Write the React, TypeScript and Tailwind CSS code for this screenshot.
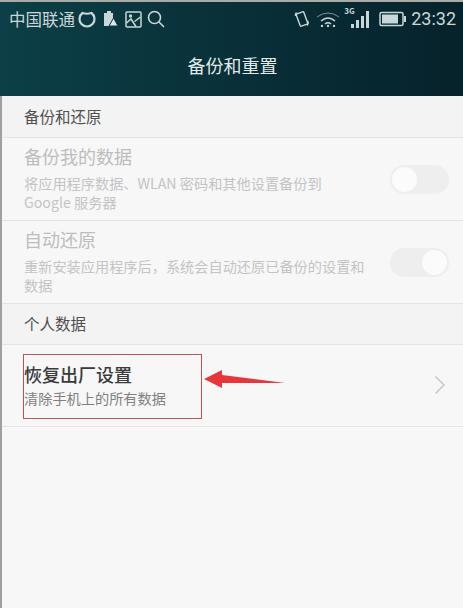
const cjk = { fontFamily: '"Noto Sans CJK SC", "Liberation Sans", sans-serif' }

function StatusBar() {
  return (
    <div className="flex h-[34px] items-center justify-between pl-[9px] pr-[7px] text-[#c8d8d8]">
      <div className="flex items-center">
        <span className="text-[16.5px] leading-none">中国联通</span>
        <svg width="18" height="18" viewBox="0 0 18 18" className="ml-[3px]" fill="none" stroke="currentColor" strokeWidth="2.2">
          <path d="M4.5 3 A7.5 7.5 0 1 0 13.5 3 Q9 4.5 4.5 3Z" />
        </svg>
        <svg width="17" height="18" viewBox="0 0 17 18" className="ml-[6px]" fill="currentColor">
          <path d="M5 1h4v2h2v6L7 16H2V3h3z" />
          <path d="M11.5 8l4.5 8H7z" fill="#dfe8e8" stroke="#103f46" />
        </svg>
        <svg width="17" height="17" viewBox="0 0 17 17" className="ml-[6px]" fill="none" stroke="currentColor" strokeWidth="1.5">
          <rect x="1" y="1" width="15" height="15" rx="1" />
          <path d="M1.5 12 L6 8 L11 15.5 M9.5 10.5 L15.5 6" />
          <circle cx="5.5" cy="5" r="1" />
        </svg>
        <svg width="18" height="18" viewBox="0 0 18 18" className="ml-[5px]" fill="none" stroke="currentColor" strokeWidth="1.6">
          <circle cx="7.5" cy="7.5" r="6" />
          <path d="M12 12 L17 17" />
        </svg>
      </div>
      <div className="flex items-center">
        <svg width="16" height="18" viewBox="0 0 16 18" fill="none" stroke="currentColor" strokeWidth="1.4">
          <rect x="4" y="2.5" width="8" height="13" rx="1" transform="rotate(-20 8 9)" />
          <path d="M13.5 11 Q15 13 13 15.5 M1.5 6 Q1 4 2.5 2.5" />
        </svg>
        <svg width="24" height="16" viewBox="0 0 24 16" className="ml-[6px]" fill="none" stroke="currentColor">
          <path d="M1 6 Q12 -2 23 6" strokeWidth="1" opacity="0.6" />
          <path d="M5 10 Q12 4 19 10" strokeWidth="1.6" />
          <path d="M9 13 Q12 10.5 15 13" strokeWidth="1.6" />
          <circle cx="12" cy="15" r="1.2" fill="currentColor" stroke="none" />
          <circle cx="6" cy="15" r="1.2" fill="currentColor" stroke="none" />
          <circle cx="18" cy="15" r="1.2" fill="currentColor" stroke="none" />
        </svg>
        <div className="relative ml-[4px] h-[20px] w-[25px]">
          <span className="absolute left-0 top-[-2px] text-[8px] font-bold leading-none">3G</span>
          <svg width="25" height="20" viewBox="0 0 25 20" fill="currentColor">
            <rect x="7" y="15" width="3" height="4" />
            <rect x="12" y="11" width="3" height="8" />
            <rect x="17" y="7" width="3" height="12" />
            <rect x="22" y="2" width="3" height="17" />
          </svg>
        </div>
        <svg width="27" height="16" viewBox="0 0 27 16" className="ml-[10px]">
          <rect x="1" y="1.5" width="23" height="13" rx="1.5" fill="none" stroke="#c8d8d8" strokeWidth="1.5" />
          <rect x="3" y="3.5" width="16" height="9" fill="#c8d8d8" />
          <rect x="25" y="5" width="2" height="6" fill="#c8d8d8" />
        </svg>
        <span className="ml-[5px] text-[18px] leading-none" style={{ fontFamily: 'Roboto, sans-serif' }}>23:32</span>
      </div>
    </div>
  )
}

function SectionHeader({ title, height }: { title: string; height: string }) {
  return (
    <div className={`flex items-center border-b border-[#e4e4e4] bg-[#f3f3f3] pl-[22px] text-[15.5px] text-[#505050] ${height}`}>
      {title}
    </div>
  )
}

function Toggle({ on }: { on?: boolean }) {
  return (
    <div className={`flex h-[29px] w-[59px] items-center rounded-full bg-[#eeeeee] p-[2px] ${on ? 'justify-end' : 'justify-start'}`}>
      <div className="h-[25px] w-[25px] rounded-full bg-[#fbfbfb]" />
    </div>
  )
}

function ToggleRow({ title, desc, on }: { title: string; desc: string; on?: boolean }) {
  return (
    <div className="flex h-[83px] items-center border-b border-[#e4e4e4] pl-[22px] pr-[14px]">
      <div className="min-w-0 flex-1 pb-[3px]">
        <p className="text-[18px] leading-[24px] text-[#bdbdbd]">{title}</p>
        <p className="mt-[6px] w-[345px] text-[14.2px] leading-[19px] text-[#c4c4c4]">{desc}</p>
      </div>
      <Toggle on={on} />
    </div>
  )
}

export default function App() {
  return (
    <div className="flex h-[608px] w-[463px] flex-col overflow-hidden bg-[#f7f7f7]" style={cjk}>
      <div className="h-[2px] bg-[#a9aca6]" />
      <header className="h-[94px] bg-gradient-to-r from-[#0c3f47] to-[#06222b]">
        <StatusBar />
        <h1 className="mt-[17px] pl-[2px] text-center text-[18px] leading-[24px] text-[#e0eaea]">备份和重置</h1>
      </header>
      <div className="flex-1 border-l-2 border-[#a0a0a0]">
        <SectionHeader title="备份和还原" height="h-[42px]" />
        <ToggleRow
          title="备份我的数据"
          desc="将应用程序数据、WLAN 密码和其他设置备份到 Google 服务器"
        />
        <ToggleRow
          title="自动还原"
          desc="重新安装应用程序后，系统会自动还原已备份的设置和数据"
          on
        />
        <SectionHeader title="个人数据" height="h-[41px]" />
        <div className="flex h-[82px] items-center border-b border-[#e4e4e4] pb-[2px] pl-[22px] pr-[17px]">
          <div className="min-w-0 flex-1">
            <p className="text-[18px] font-medium leading-[24px] text-[#3a3a3a]">恢复出厂设置</p>
            <p className="mt-[2px] text-[14.2px] leading-[20px] text-[#808080]">清除手机上的所有数据</p>
          </div>
          <svg width="12" height="20" viewBox="0 0 12 20" fill="none" stroke="#c4c4c4" strokeWidth="1.4">
            <path d="M1.5 1.5 L10 10 L1.5 18.5" />
          </svg>
        </div>
      </div>
      {/* annotation drawn over the screenshot */}
      <div className="pointer-events-none absolute left-[23px] top-[354px] h-[65px] w-[179px] border border-[#b9525a]" />
      <svg className="pointer-events-none absolute left-[203px] top-[368px]" width="83" height="22" viewBox="0 0 83 22">
        <path d="M1 11 L19 2 L19 7 L82 15 L19 15 L19 20 Z" fill="#e8353a" />
      </svg>
    </div>
  )
}
